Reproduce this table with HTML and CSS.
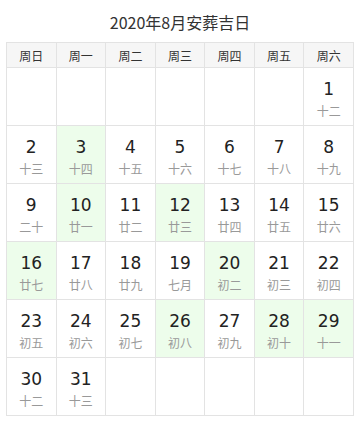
FILE: index.html
```html
<!DOCTYPE html>
<html lang="zh-CN">

<head>
    <meta charset="UTF-8">
    <meta name="viewport" content="width=device-width, initial-scale=1.0">
    <title>2020年8月安葬吉日</title>
    <link rel="stylesheet" href="styles.css">
</head>

<body>

    <div class="calendar">
        <h1>2020年8月安葬吉日</h1>
        <table>
            <thead>
                <tr>
                    <th>周日</th>
                    <th>周一</th>
                    <th>周二</th>
                    <th>周三</th>
                    <th>周四</th>
                    <th>周五</th>
                    <th>周六</th>
                </tr>
            </thead>
            <tbody>
                <tr>
                    <td></td>
                    <td></td>
                    <td></td>
                    <td></td>
                    <td></td>
                    <td></td>
                    <td><span class="day">1</span><span class="lunar">十二</span></td>
                </tr>
                <tr>
                    <td><span class="day">2</span><span class="lunar">十三</span></td>
                    <td class="good"><span class="day">3</span><span class="lunar">十四</span></td>
                    <td><span class="day">4</span><span class="lunar">十五</span></td>
                    <td><span class="day">5</span><span class="lunar">十六</span></td>
                    <td><span class="day">6</span><span class="lunar">十七</span></td>
                    <td><span class="day">7</span><span class="lunar">十八</span></td>
                    <td><span class="day">8</span><span class="lunar">十九</span></td>
                </tr>
                <tr>
                    <td><span class="day">9</span><span class="lunar">二十</span></td>
                    <td class="good"><span class="day">10</span><span class="lunar">廿一</span></td>
                    <td><span class="day">11</span><span class="lunar">廿二</span></td>
                    <td class="good"><span class="day">12</span><span class="lunar">廿三</span></td>
                    <td><span class="day">13</span><span class="lunar">廿四</span></td>
                    <td><span class="day">14</span><span class="lunar">廿五</span></td>
                    <td><span class="day">15</span><span class="lunar">廿六</span></td>
                </tr>
                <tr>
                    <td class="good"><span class="day">16</span><span class="lunar">廿七</span></td>
                    <td><span class="day">17</span><span class="lunar">廿八</span></td>
                    <td><span class="day">18</span><span class="lunar">廿九</span></td>
                    <td><span class="day">19</span><span class="lunar">七月</span></td>
                    <td class="good"><span class="day">20</span><span class="lunar">初二</span></td>
                    <td><span class="day">21</span><span class="lunar">初三</span></td>
                    <td><span class="day">22</span><span class="lunar">初四</span></td>
                </tr>
                <tr>
                    <td><span class="day">23</span><span class="lunar">初五</span></td>
                    <td><span class="day">24</span><span class="lunar">初六</span></td>
                    <td><span class="day">25</span><span class="lunar">初七</span></td>
                    <td class="good"><span class="day">26</span><span class="lunar">初八</span></td>
                    <td><span class="day">27</span><span class="lunar">初九</span></td>
                    <td class="good"><span class="day">28</span><span class="lunar">初十</span></td>
                    <td class="good"><span class="day">29</span><span class="lunar">十一</span></td>
                </tr>
                <tr>
                    <td><span class="day">30</span><span class="lunar">十二</span></td>
                    <td><span class="day">31</span><span class="lunar">十三</span></td>
                    <td></td>
                    <td></td>
                    <td></td>
                    <td></td>
                    <td></td>
                </tr>
            </tbody>
        </table>
    </div>

</body>

</html>
```

FILE: styles.css
```css
* {
    margin: 0;
    padding: 0;
    box-sizing: border-box;
}

body {
    font-family: "Noto Sans CJK SC", "Noto Sans", sans-serif;
    background-color: #ffffff;
    color: #333333;
}

.calendar {
    padding: 0 5px 0 6px;
}

h1 {
    font-size: 16px;
    font-weight: normal;
    line-height: 20px;
    text-align: center;
    padding-top: 12px;
    margin-bottom: 10px;
    color: #333333;
}

table {
    width: 348px;
    border-collapse: collapse;
    table-layout: fixed;
}

th,
td {
    border: 1px solid #e3e3e3;
    text-align: center;
}

th {
    height: 25px;
    background-color: #f6f6f6;
    font-size: 12px;
    font-weight: normal;
    color: #333333;
}

td {
    height: 58px;
    vertical-align: top;
    padding-top: 10px;
}

td.good {
    background-color: #edfdeb;
}

.day {
    display: block;
    font-family: "DejaVu Sans", sans-serif;
    font-size: 17px;
    line-height: 22px;
    color: #222222;
}

.lunar {
    display: block;
    font-size: 12px;
    line-height: 18px;
    margin-top: 2px;
    color: #999999;
}
```
